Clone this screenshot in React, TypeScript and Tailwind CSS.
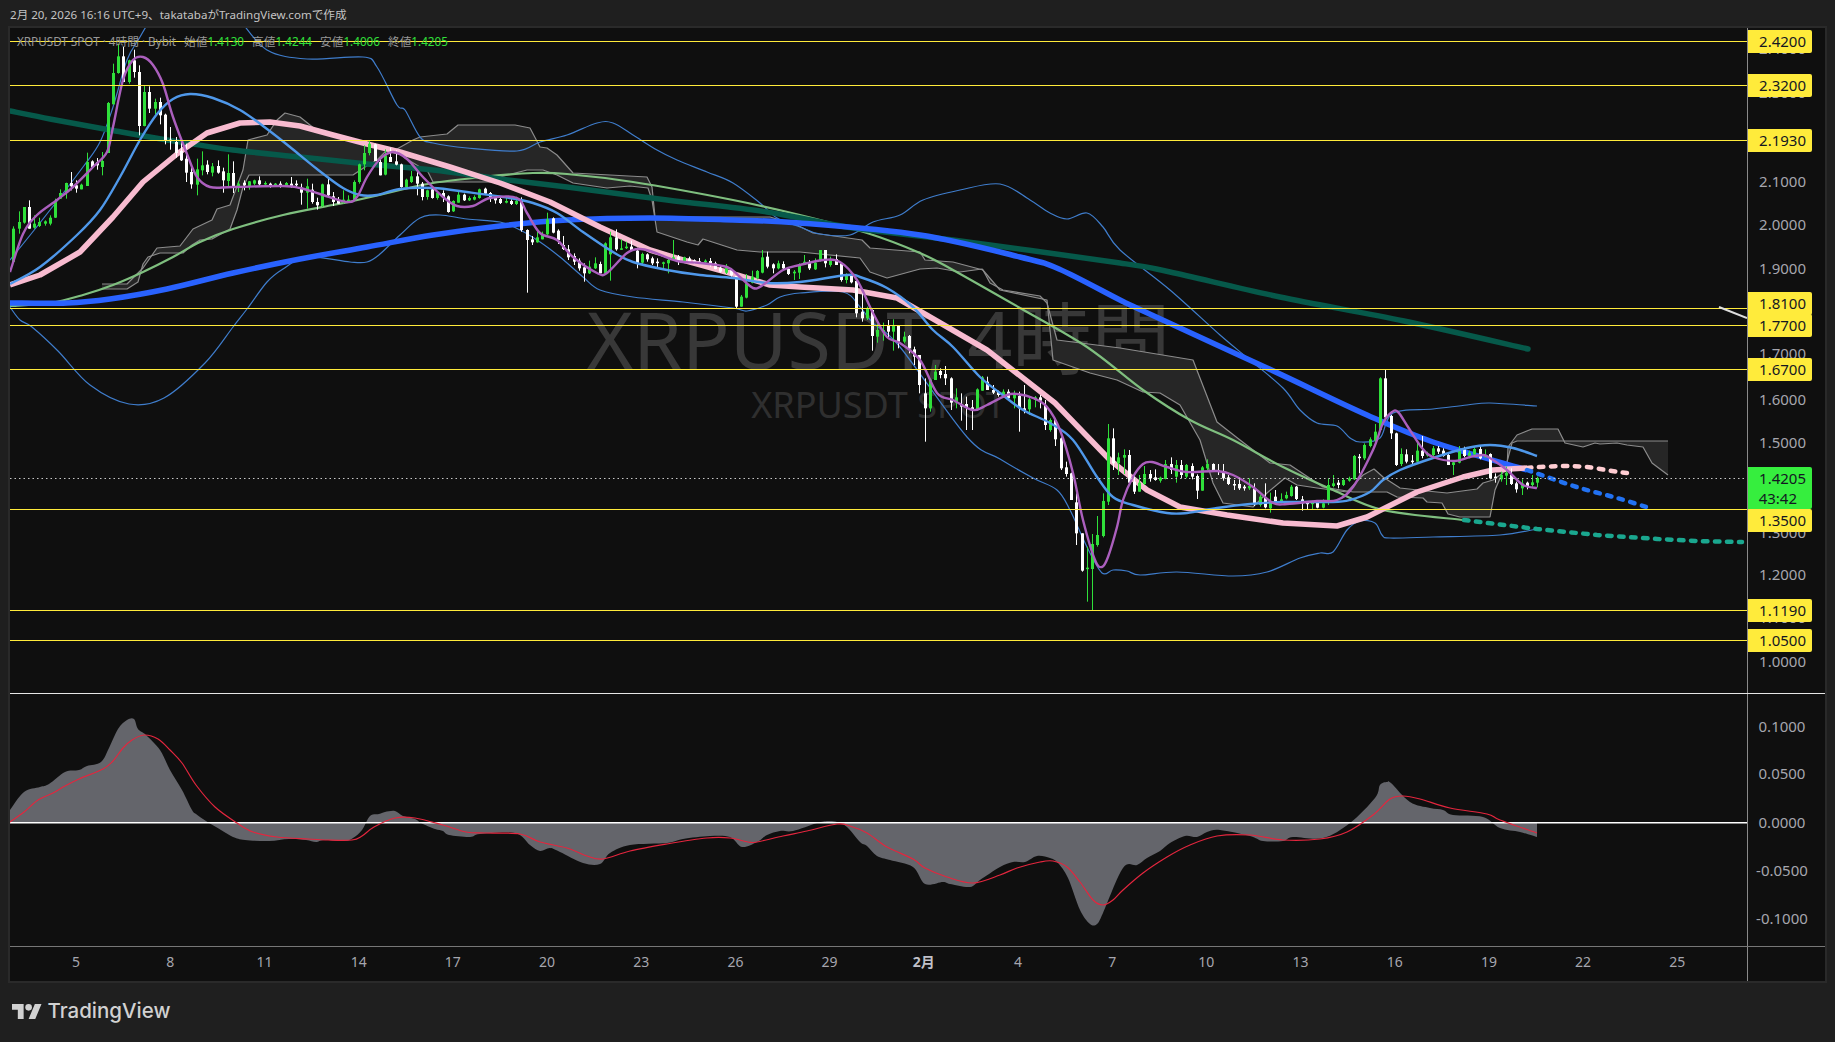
import React from 'react';

const F = { fontFamily: '"Noto Sans","Noto Sans CJK JP",sans-serif' };

type P = [number, number];
const pts = (s: string): P[] => s.trim().split(/\s+/).map((t) => t.split(',').map(Number) as P);

// Catmull-Rom smoothing so indicator curves stay round
function smooth(s: string): string {
  const p = pts(s);
  let d = `M${p[0][0]} ${p[0][1]}`;
  for (let i = 0; i < p.length - 1; i++) {
    const a = p[Math.max(i - 1, 0)], b = p[i], c = p[i + 1], e = p[Math.min(i + 2, p.length - 1)];
    const c1x = b[0] + (c[0] - a[0]) / 6, c1y = b[1] + (c[1] - a[1]) / 6;
    const c2x = c[0] - (e[0] - b[0]) / 6, c2y = c[1] - (e[1] - b[1]) / 6;
    d += `C${c1x.toFixed(1)} ${c1y.toFixed(1)} ${c2x.toFixed(1)} ${c2y.toFixed(1)} ${c[0]} ${c[1]}`;
  }
  return d;
}
const rev = (s: string) => s.trim().split(/\s+/).reverse().join(' ');

const darkGreen = '10,111 50,119 110,130 167,140 233,150 300,157 367,164 433,170 500,179 567,187 667,200 767,212 853,228 953,240 1120,263 1170,272 1280,297 1404,321 1528,349';
const thickBlue = '10,303 67,303 110,299 167,289 233,273 300,259 367,247 433,235 500,226 567,220 650,218 733,220 800,223 920,235 1020,257 1059,269 1120,300 1141,310 1267,368 1367,415 1433,442 1527,470';
const pink = '10,285 40,275 80,252 113,217 143,182 177,154 207,133 240,123 270,122 300,126 333,135 367,144 400,152 450,167 500,183 550,202 600,227 650,250 683,260 737,275 770,285 800,287 853,290 897,298 930,317 987,350 1055,403 1110,460 1147,490 1180,507 1227,515 1283,523 1337,526 1367,517 1417,492 1463,477 1493,470 1527,468';
const midBlue = '10,284 40,267 77,235 100,210 120,177 140,140 157,114 173,99 190,94 213,98 240,110 267,129 290,147 317,169 343,188 360,195 377,195 400,189 433,188 467,192 510,198 533,203 557,213 583,232 613,252 633,262 667,270 700,275 733,278 767,283 800,282 847,275 860,277 887,288 913,307 933,330 953,347 980,377 1000,393 1023,410 1050,423 1073,440 1097,477 1113,497 1133,505 1167,513 1187,513 1217,508 1250,504 1283,502 1333,502 1350,500 1370,492 1383,480 1400,470 1433,458 1467,448 1490,445 1513,448 1537,456';
const purple = '10,272 23,234 37,215 57,200 73,187 93,167 107,152 113,127 123,80 133,60 143,57 153,65 163,84 173,117 187,154 197,177 210,187 233,187 283,186 300,188 320,194 347,202 357,197 367,177 380,159 393,152 407,159 423,177 443,197 457,206 473,206 490,198 517,198 527,213 540,233 557,240 573,257 597,273 607,273 627,253 640,249 653,252 677,261 700,263 727,267 740,277 753,288 763,285 783,270 800,265 823,260 840,262 857,280 873,313 887,337 900,343 920,360 937,393 953,400 973,410 987,405 1007,395 1017,394 1033,398 1047,407 1060,430 1073,473 1083,520 1095,560 1102,567 1108,557 1117,527 1123,500 1133,477 1143,464 1152,462 1167,467 1187,472 1217,471 1233,475 1253,487 1273,503 1287,504 1317,501 1337,500 1353,487 1373,450 1383,423 1392,412 1398,412 1408,427 1422,448 1433,457 1455,461 1470,457 1483,455 1490,458 1507,470 1523,485 1537,488';
const lightGreen = '10,306 50,303 83,295 113,285 143,272 173,257 200,242 233,229 283,215 333,205 353,201 400,190 433,183 483,177 533,173 567,174 633,182 733,200 800,215 867,233 920,253 953,270 1020,308 1087,347 1143,390 1190,420 1233,440 1283,467 1333,490 1383,510 1463,520';
const bbUpper = '10,260 43,219 83,167 100,142 113,107 127,60 140,37 150,20 M 240,20 267,50 307,59 363,57 377,67 397,105 405,110 420,137 433,143 467,148 517,151 540,142 567,135 597,123 613,123 633,135 657,150 677,160 707,172 733,183 760,203 777,218 800,227 820,234 850,235 873,222 900,215 923,200 960,190 1000,184 1030,200 1050,213 1067,219 1087,213 1103,227 1120,250 1170,290 1220,335 1250,360 1283,388 1300,410 1317,423 1337,426 1350,438 1360,442 1380,438 1393,413 1433,409 1467,405 1490,403 1537,406';
const bbLower = '10,307 20,320 32,327 58,351 90,385 129,404 164,398 205,363 233,327 247,309 267,282 283,269 307,257 350,262 367,262 380,254 400,235 420,218 440,215 467,219 500,222 520,230 540,242 560,257 583,277 600,290 633,297 683,302 733,308 747,311 767,305 780,297 800,293 843,292 860,307 873,323 900,347 967,437 1000,459 1033,478 1057,490 1070,510 1087,547 1102,573 1113,570 1127,571 1140,575 1177,572 1233,576 1267,572 1300,558 1320,553 1333,552 1347,530 1360,521 1375,523 1382,535 1390,538 1433,537 1500,535 1537,529';
const cloudA = '102,284 127,284 143,268 157,248 180,246 193,229 212,220 217,209 230,205 243,170 248,140 267,135 277,120 285,113 300,117 315,129 350,140 397,149 405,158 420,167 427,170 433,182 490,182 500,177 527,170 543,170 557,175 573,183 607,188 630,186 648,188 652,200 657,232 687,242 698,245 703,239 737,250 760,252 800,252 860,258 870,272 887,278 920,269 937,268 960,272 982,269 1000,290 1047,300 1053,360 1090,373 1117,380 1143,392 1160,393 1180,405 1200,440 1213,483 1223,503 1253,507 1267,493 1285,478 1297,485 1317,488 1347,492 1363,475 1374,469 1383,477 1400,488 1427,491 1447,493 1477,489 1483,483 1493,480 1507,470 1508,447 1517,435 1532,429 1558,429 1565,443 1583,447 1595,443 1600,444 1617,443 1627,445 1643,447 1652,463 1668,475';
const cloudB = '102,289 127,289 138,282 143,264 148,257 160,253 183,253 192,245 200,240 212,239 230,229 237,210 243,187 249,175 353,175 365,167 377,160 387,150 397,149 413,140 420,137 447,134 458,125 515,125 530,128 540,147 547,148 557,155 573,173 647,177 652,187 655,217 770,217 797,225 813,233 862,240 870,248 920,252 925,260 953,262 983,270 990,283 1003,290 1040,296 1047,303 1057,340 1120,348 1193,360 1217,422 1240,440 1270,463 1290,465 1323,487 1353,492 1387,492 1397,497 1423,498 1427,502 1442,503 1448,514 1460,517 1490,517 1495,490 1507,462 1512,443 1517,441 1668,441';

const macd = '10,810 24,792 40,787 49,784 65,772 79,770 87,766 101,762 109,748 118,729 127,720 134,719 138,729 146,735 160,750 170,770 182,790 192,810 196,814 206,821 221,830 233,837 245,840 269,841 289,839 306,840 316,842 324,840 344,841 353,838 362,830 370,816 379,814 385,812 395,811 403,816 415,819 421,823 435,829 443,831 449,835 470,837 480,834 515,833 530,845 540,851 550,848 560,852 583,863 600,864 610,853 630,845 667,843 683,839 710,836 730,837 742,847 757,842 767,835 780,831 793,831 817,823 828,821 837,822 847,827 860,842 867,846 877,856 890,860 913,867 925,884 943,882 950,884 970,887 980,880 1000,867 1013,862 1025,862 1037,856 1050,858 1058,863 1068,878 1080,910 1090,924 1097,924 1103,913 1123,868 1137,865 1147,858 1160,851 1170,843 1185,836 1197,837 1207,832 1220,830 1250,836 1263,841 1283,841 1293,837 1323,838 1350,823 1375,798 1380,785 1387,782 1391,783 1410,802 1430,808 1443,810 1453,815 1483,817 1500,828 1520,832 1537,837';
const signal = '10,822 24,812 38,800 53,793 65,786 79,779 103,769 113,761 123,748 132,740 144,735 158,739 170,750 182,763 196,785 215,807 237,823 253,832 277,837 308,839 328,840 352,840 362,836 374,827 395,818 415,818 443,825 466,832 486,833 520,834 540,842 567,848 587,856 603,859 630,851 667,844 707,838 730,838 748,842 757,842 783,836 807,831 837,824 850,826 867,833 887,847 913,859 925,868 947,877 973,883 1000,875 1017,868 1040,862 1053,861 1067,867 1080,882 1093,900 1103,905 1113,900 1123,890 1143,873 1167,857 1190,845 1217,836 1250,835 1283,840 1320,839 1347,832 1373,815 1390,799 1403,796 1420,799 1450,808 1487,814 1500,820 1537,833';

// candles: colour, wick top, body top, body bottom, wick bottom (in crop coordinates per segment)
const seg1 = 'g598,605,705,705;g553,585,605,620;g540,540,587,590;w520,540,605,605;g565,590,602,605;g572,585,597,600;g580,583,590,596;g565,572,590,595;g515,525,572,573;g487,498,515,515;g467,468,495,515;w435,468,478,490;w460,475,485,497;g470,473,487,487;g377,405,477,477;w400,403,420,423;w393,405,415,428;g375,402,420,445;g225,228,378,378;g110,138,232,232;g50,88,138,140;w60,88,165,165;g98,100,165,170;w68,100,135,152;w115,135,297,325;g175,195,297,298;w178,195,245,258;g215,225,245,262;w212,225,265,292;w260,263,340,352;w300,338,342,368;w330,345,378,392;w340,372,400,402;w350,395,437,465;w420,435,472,485;g395,427,473,505;g373,415,430,445;w400,413,435,442;g408,418,437,448;w400,417,437,440;w422,433,460,497;g382,438,462,478;w403,438,480,498;g462,470,480,495;w460,467,475,490;g462,463,478,488;g458,460,470,475;w448,460,472,477;g463,468,471,478;w467,470,478,482;g468,470,476,478;w463,470,476,482;g465,468,474,478;w450,470,480,482;w460,470,474,483;w470,482,497,533;g455,478,497,545;w470,488,525,530;w512,525,535,548;g470,472,537,540;w450,472,505,510;w495,508,525,537;w510,522,530,530;g490,518,527,530;g505,518,525,528;g460,465,518,520;g410,412,465,470;g355,378,412,430;g342,350,378,385;w350,352,402,400;w395,405,445,445;g367,385,443,445;w362,390,405,403;w370,403,413,415;w410,412,480,482;g455,458,480,482;g432,448,465,468;w433,448,470,505;w465,470,510,520;g488,490,510,518;w485,487,513,515;g495,497,513,518;w490,498,510,525;w505,508,555,557;g520,522,553,555;g490,503,527,527;w500,503,520,522;g508,513,520,522;g505,510,518,520;g485,487,513,515;w482,485,500,503;w495,498,510,525;w505,510,520,530';
const seg2 = 'w230,237,249,252;g228,243,248,250;w238,243,252,255;g230,243,252,255;w232,240,330,335;w328,330,360,518;w348,358,367,375;g335,352,367,368;g335,345,358,358;g278,298,343,345;w292,295,338,340;w328,332,360,372;w348,375,387,390;w375,388,412,420;w400,408,425,435;w415,422,445,452;w430,442,460,485;g422,440,460,462;g412,430,445,447;w425,432,460,460;g367,370,460,465;g335,352,403,482;w328,352,388,392;g358,385,388,390;g365,380,384,387;w362,380,390,390;w383,392,430,445;g398,402,428,438;w400,403,418,425;w410,415,430,435;w415,425,428,442;g425,427,430,445;g417,420,430,460;g360,412,418,418;w405,410,420,435;g410,412,423,425;w410,415,425,430;w418,421,428,432;w414,424,428,432;g418,422,427,430;w414,423,430,440;w425,430,447,448;w435,443,455,458;g432,440,458,462;w445,450,466,470;w468,468,560,565;g525,530,560,560;g462,490,533,535;g452,470,488,490;g450,453,475,478;g390,412,458,460;w395,410,440,445;w430,433,445,460;g422,430,445,448;w424,432,445,450;w445,447,462,465;g450,455,460,480;g430,438,458,477;g405,425,435,435;w420,428,445,450;g415,428,448,450;g390,390,422,425;w390,390,430,442;g410,420,435,440;w403,417,435,435;w430,430,480,485;g460,462,480,490;w460,462,487,490;w480,483,580,592;w520,575,595,605;g560,565,595,600;w568,570,648,692;g612,630,650,668;g608,630,635,662;w600,615,635,655;g598,618,635,692';
const seg3 = 'w378,378,425,445;g395,410,425,430;w405,408,445,460;w440,448,470,495;w465,465,555,580;w535,580,625,725;g535,538,625,635;g495,515,540,540;w505,513,525,535;w498,522,535,555;w532,535,608,630;g565,592,608,625;w580,612,620,662;w590,612,622,690;w600,622,630,690;g565,568,628,628;g528,532,572,572;w530,545,570,570;w555,570,578,582;w572,576,585,590;g568,575,585,590;w568,575,595,600;g572,582,595,625;w575,588,625,695;w555,625,632,640;g590,598,628,645;g588,592,600,622;w585,592,602,625;w600,615,675,690;g655,660,690,695;w655,660,718,738;w712,715,805,810;w785,802,822,830;w818,820,900,900';
const seg4 = 'w400,427,520,555;w520,520,632,635;g560,623,627,725;g522,552,627,750;g468,525,555,560;g400,423,528,532;g192,235,425,435;w205,235,310,330;g278,292,310,345;g268,285,293,342;w270,285,368,370;w345,365,395,402;g345,368,395,395;g318,342,372,375;w330,342,355,365;w328,352,360,362;g350,353,362,368;g300,312,357,358;w292,312,330,342;g300,315,350,368;w300,315,345,355;g312,315,350,355;w310,318,350,358;w343,348,392,417;g318,322,392,392;g298,312,325,330;w310,312,330,335;w312,330,335,345;w312,338,355,362;w345,352,372,375;w360,372,375,390;w352,372,385,390;w375,380,385,392;g355,378,385,390;w370,385,432,438;g405,410,435,440;w370,412,442,445;g398,425,445,458;w390,410,425,435;g400,418,425,430;g395,405,415,418;g375,380,408,410;w378,380,417,420;w408,418,430,452;w425,428,430,448;g422,428,430,448;w420,425,443,445;g418,430,443,445;g355,375,422,435;g345,370,378,382;w360,368,375,385;g355,360,375,378;g350,355,362,365;g285,288,358,360;w282,290,294,340;g250,255,295,300;g232,238,258,262;g192,215,242,245;g52,55,210,215;w30,55,172,175;w165,168,220,237;w218,220,315,318;g265,282,312,318;w268,283,305,310;w285,302,305,318;g245,272,305,305;w228,272,288,295;g275,282,286,290;g258,265,285,288;w258,265,275,282;w265,272,288,290;w282,285,315,315;g305,307,315,345;g258,268,308,310;w260,268,288,292;g272,278,288,295;g262,267,283,285;w258,267,295,298;g268,285,292,292;w280,282,355,358;w340,350,353,368;g335,345,358,365;g320,338,347,375;w325,345,372,375;w365,370,388,398;g358,370,385,405;w365,368,378,388;g345,367,375,380;g350,354,368,382';

type C = { x: number; g: boolean; wt: number; bt: number; bb: number; wb: number };
const candles: C[] = (() => {
  const out: C[] = [];
  const add = (s: string, off: number) => {
    for (const t of s.split(';')) {
      const [a, b, c, d] = t.slice(1).split(',').map(Number);
      const i = out.length;
      out.push({ x: Math.round(13.3 + 5.237 * i), g: t[0] === 'g', wt: off + a / 3, bt: off + b / 3, bb: off + c / 3, wb: off + d / 3 });
    }
  };
  add(seg1, 27);
  add(seg2, 120);
  add(seg3, 200);
  add(seg4, 360);
  return out;
})();

const hLines = [41.5, 85.5, 140.5, 308.5, 325.5, 369.5, 509.5, 610.5, 640.5];

const grayTicks: [string, number][] = [
  ['2.4000', 48], ['2.3000', 92], ['2.1000', 180.7], ['2.0000', 223.7], ['1.9000', 267.7], ['1.7000', 353],
  ['1.6000', 398.7], ['1.5000', 442], ['1.3000', 531.7], ['1.2000', 573.7], ['1.1000', 617], ['1.0000', 661],
];
const yellowTags: [string, number][] = [
  ['2.4200', 41.5], ['2.3200', 85.5], ['2.1930', 140.5], ['1.8100', 303], ['1.7700', 325.5], ['1.6700', 369.5], ['1.3500', 520.5], ['1.1190', 610.5], ['1.0500', 640.5],
];
const macdTicks: [string, number][] = [['0.1000', 726], ['0.0500', 772.5], ['0.0000', 822], ['-0.0500', 869.5], ['-0.1000', 917.5]];
const dates = ['5', '8', '11', '14', '17', '20', '23', '26', '29', '2月', '4', '7', '10', '13', '16', '19', '22', '25'];

const ohlc: [string, string][] = [['始値', '1.4130'], ['高値', '1.4244'], ['安値', '1.4006'], ['終値', '1.4205']];

export default function App() {
  return (
    <div className="w-[1835px] h-[1042px] bg-[#1f1f1f] flex flex-col overflow-hidden" style={F}>
      <div className="h-[26px] pl-[10px] pt-[3px] flex items-center text-[11.6px] text-[#c4c4c4] leading-none whitespace-nowrap">
        2月 20, 2026 16:16 UTC+9、takatabaがTradingView.comで作成
      </div>
      <div className="ml-[8px] w-[1819px] h-[957px] border-2 border-[#2a2a2a] bg-[#0f0f0f] flex flex-col">
        {/* price pane */}
        <div className="h-[665px] flex">
          <div className="w-[1737px] relative overflow-hidden">
            <div className="absolute inset-x-0 top-[252px] flex flex-col items-center text-[#383838]">
              <div className="text-[79px] leading-[118px] whitespace-nowrap">XRPUSDT, 4時間</div>
              <div className="text-[36px] leading-[48px] -mt-[17px] text-[#2f2f2f] whitespace-nowrap">XRPUSDT SPOT</div>
            </div>
            <svg className="absolute inset-0 block" width="1737" height="665" viewBox="10 28 1737 665" fill="none" strokeLinejoin="round">
              <polygon points={`${cloudA} ${rev(cloudB)}`} fill="#262626" />
              <polyline points={cloudA} stroke="#8c8c8c" strokeWidth="1.2" />
              <polyline points={cloudB} stroke="#8c8c8c" strokeWidth="1.2" />
              <path d={smooth(bbUpper.split(' M ')[0])} stroke="#3f7dcc" strokeWidth="1.2" />
              <path d={smooth(bbUpper.split(' M ')[1])} stroke="#3f7dcc" strokeWidth="1.2" />
              <path d={smooth(bbLower)} stroke="#3f7dcc" strokeWidth="1.2" />
              <path d={smooth(lightGreen)} stroke="#7fbf7f" strokeWidth="2.2" />
              <path d={smooth(darkGreen)} stroke="#06594a" strokeWidth="5.5" strokeLinecap="round" />
              <path d={smooth(thickBlue)} stroke="#2962ff" strokeWidth="5.5" />
              <polyline points={pink} stroke="#f8bbd0" strokeWidth="5.5" />
              <polyline points="1464,520 1537,529 1597,535 1657,539 1697,541 1742,542" stroke="#1aa78f" strokeWidth="4.5" strokeLinecap="round" strokeDasharray="4.5 7.5" />
              <path d={smooth('1527,468 1540,467 1563,466 1587,467 1612,471 1627,473')} stroke="#ffcdd2" strokeWidth="4.5" strokeLinecap="round" strokeDasharray="4.5 7.5" />
              <path d={smooth('1527,470 1547,477 1580,488 1617,498 1653,509')} stroke="#2272f2" strokeWidth="4.5" strokeLinecap="round" strokeDasharray="4.5 7.5" />
              {candles.map((c, i) => (
                <g key={i} fill={c.g ? '#2fe03a' : '#ffffff'}>
                  <rect x={c.x} y={c.wt} width="1" height={Math.max(c.wb - c.wt, 1)} />
                  <rect x={c.x - 1} y={c.bt} width="3" height={Math.max(c.bb - c.bt, 1.5)} />
                </g>
              ))}
              <path d={smooth(midBlue)} stroke="#4f98ea" strokeWidth="2.4" />
              <path d={smooth(purple)} stroke="#ab5fbd" strokeWidth="2.4" />
              {hLines.map((y) => (
                <line key={y} x1="10" x2="1747" y1={y} y2={y} stroke="#ffeb3b" strokeWidth="1" />
              ))}
              <line x1="10" x2="1747" y1="478.5" y2="478.5" stroke="#c8c8c8" strokeWidth="1" strokeDasharray="1.5 3" />
              <line x1="1719" y1="307" x2="1747" y2="318" stroke="#dedede" strokeWidth="2" />
            </svg>
            <div className="absolute left-[7px] top-[8px] flex items-center gap-[8px] text-[11.7px] leading-none text-[#989898] whitespace-nowrap">
              <span>XRPUSDT SPOT · 4時間 · Bybit</span>
              {ohlc.map(([k, v]) => (
                <span key={k}>
                  {k}
                  <span className="text-[#2fe03a]">{v}</span>
                </span>
              ))}
            </div>
          </div>
          <div className="w-[78px] border-l border-[#8a8a8a] relative overflow-hidden">
            {grayTicks.map(([t, y]) => (
              <div key={t} className="absolute left-0 w-[64px] h-[20px] pr-[6px] text-right text-[15px] leading-[20px] text-[#a6a6ae]" style={{ top: y - 28 - 10 }}>
                {t}
              </div>
            ))}
            {yellowTags.map(([t, y]) => (
              <div key={t} className="absolute left-0 w-[64px] h-[23px] pr-[6px] text-right text-[15px] leading-[22px] text-[#131722] bg-[#ffeb3b] rounded-r-[2px]" style={{ top: y - 28 - 11.5 }}>
                {t}
              </div>
            ))}
            <div className="absolute left-0 top-[439px] w-[64px] h-[42px] pr-[6px] flex flex-col items-end bg-[#36ee3e] rounded-r-[2px] text-[#131722]">
              <span className="text-[15px] leading-[22px]">1.4205</span>
              <span className="text-[15px] leading-[18px] pr-[9px]">43:42</span>
            </div>
          </div>
        </div>
        <div className="h-[1px] bg-[#e6e6e6]" />
        {/* oscillator pane */}
        <div className="h-[252px] flex">
          <div className="w-[1737px] relative overflow-hidden">
            <svg className="block" width="1737" height="252" viewBox="10 694 1737 252" fill="none" strokeLinejoin="round">
              <path d={`M10 823L${smooth(macd).slice(1)}L1537 823Z`} fill="#64656b" />
              <line x1="10" x2="1747" y1="822.8" y2="822.8" stroke="#ffffff" strokeWidth="1.4" />
              <path d={smooth(signal)} stroke="#e3263e" strokeWidth="1.2" />
            </svg>
          </div>
          <div className="w-[78px] border-l border-[#8a8a8a] relative">
            {macdTicks.map(([t, y]) => (
              <div key={t} className="absolute left-0 w-[68px] h-[20px] text-center text-[15px] leading-[20px] text-[#a6a6ae]" style={{ top: y - 694 - 10 }}>
                {t}
              </div>
            ))}
          </div>
        </div>
        {/* time axis */}
        <div className="flex-1 flex border-t border-[#777777]">
          <div className="w-[1737px] flex pl-[19px] pb-[5px] items-center text-[14px] text-[#a6a6ae]">
            {dates.map((d) => (
              <div key={d} className={d === '2月' ? 'w-[94.2px] text-center font-bold text-[#c0c0c8]' : 'w-[94.2px] text-center'}>
                {d}
              </div>
            ))}
          </div>
          <div className="w-[78px] border-l border-[#8a8a8a]" />
        </div>
      </div>
      <div className="flex-1 pl-[12px] pb-[3px] flex items-center gap-[6px] text-[#d1d1d1]">
        <svg width="29.5" height="15" viewBox="0 4 35.5 18" fill="currentColor" className="block">
          <path d="M14 22H7V11H0V4h14v18zM28 22h-8l7.5-18h8L28 22z" />
          <circle cx="20" cy="8" r="4" />
        </svg>
        <span className="text-[20.5px] font-medium leading-none" style={{ fontFamily: 'Inter, sans-serif' }}>TradingView</span>
      </div>
    </div>
  );
}
